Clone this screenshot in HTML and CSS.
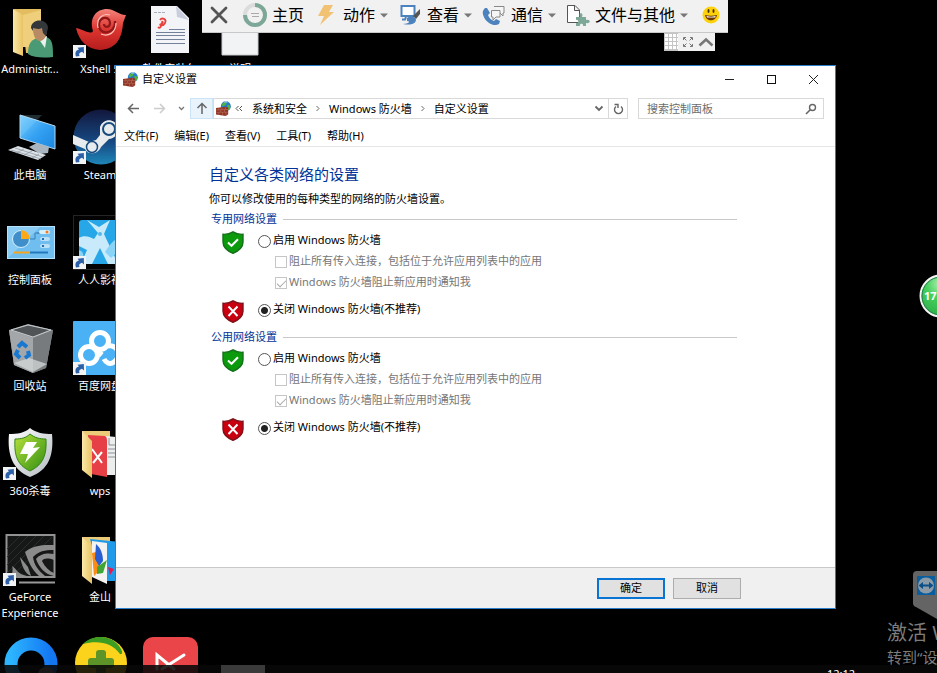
FILE: index.html
```html
<!DOCTYPE html>
<html lang="zh-CN">
<head>
<meta charset="utf-8">
<title>自定义设置</title>
<link rel="stylesheet" href="styles.css">
</head>
<body>
<svg class="defs" aria-hidden="true">
  <defs>
    <linearGradient id="fold" x1="0" x2="1"><stop offset="0" stop-color="#fbe9a8"/><stop offset="1" stop-color="#e9c365"/></linearGradient>
    <linearGradient id="screen" x1="0" y1="0" x2="1" y2="1"><stop offset="0" stop-color="#7fd0ff"/><stop offset=".5" stop-color="#35a2f2"/><stop offset="1" stop-color="#1a86e0"/></linearGradient>
    <linearGradient id="red" x1="0" y1="0" x2="0" y2="1"><stop offset="0" stop-color="#f4837a"/><stop offset=".5" stop-color="#dc342f"/><stop offset="1" stop-color="#b51d1d"/></linearGradient>
    <linearGradient id="steam" x1="0" y1="0" x2="0" y2="1"><stop offset="0" stop-color="#12173c"/><stop offset=".6" stop-color="#164a83"/><stop offset="1" stop-color="#1f86b8"/></linearGradient>
    <linearGradient id="ring" x1="0" x2="1"><stop offset="0" stop-color="#2cb4ff"/><stop offset="1" stop-color="#1377f2"/></linearGradient>
    <linearGradient id="lime" x1="0" y1="0" x2="1" y2="1"><stop offset="0" stop-color="#b9e23c"/><stop offset="1" stop-color="#2f8d12"/></linearGradient>
    <linearGradient id="silver" x1="0" y1="0" x2="1" y2="1"><stop offset="0" stop-color="#fff"/><stop offset="1" stop-color="#b4bcc2"/></linearGradient>
    <radialGradient id="ball" cx=".5" cy=".2" r=".8"><stop offset="0" stop-color="#b5f0b8"/><stop offset=".45" stop-color="#45cf5c"/><stop offset="1" stop-color="#2fb04a"/></radialGradient>
    <symbol id="link" viewBox="0 0 13 13"><rect width="13" height="13" fill="#f2f3f5"/><path d="M3 11.500C1.500 7.500 3.500 5 6 4.600L4.500 2.800 10.800 2 11 8.500 9 6.800C6.500 7.500 5.500 9 6.500 11Z" fill="#2b5fa8"/></symbol>
    <symbol id="firewall" viewBox="0 0 16 16">
      <circle cx="10.500" cy="5.500" r="5.300" fill="#2478d0"/><path d="M7 2.500c1.500-1.500 3-1.500 4-.5S9.500 4.500 8 5.500 6 4 7 2.500zM13 4c2 0 2.500 2 2 4s-2.500 2-2.500 0-1.500-3.500.5-4z" fill="#4fb53e"/><path d="M9 1.200q2-.8 3 .3" stroke="#c9edff" fill="none"/>
      <path d="M0 7.500 10 6l3 1V14l-2.500 2L0 14.500z" fill="#8e3526"/><path d="M0 9.500l13-.5M0 12h13M3 7.300v2M6.500 7v2.200M10 6.500V9M5 9.500v2.300M9 9.300v2.500M3 12v2.700M7 12v3.300M10.500 12v3.500" stroke="#c98270" stroke-width=".5"/>
    </symbol>
    <symbol id="ok" viewBox="0 0 22 23"><path d="M11 .8C14 2.800 17.500 3.500 21 3.300V11C21 16.500 16.500 20 11 22.300 5.500 20 1 16.500 1 11V3.300C4.500 3.500 8 2.800 11 .8Z" fill="#0b9a0b" stroke="#14701a" stroke-width="1.400"/><path d="M6 11.500 9.500 14.800 16 8.300" fill="none" stroke="#fff" stroke-width="2"/></symbol>
    <symbol id="bad" viewBox="0 0 22 23"><path d="M11 .8C14 2.800 17.500 3.500 21 3.300V11C21 16.500 16.500 20 11 22.300 5.500 20 1 16.500 1 11V3.300C4.500 3.500 8 2.800 11 .8Z" fill="#c80010" stroke="#7e1119" stroke-width="1.400"/><path d="M6.500 6.500 15.500 16M15.500 6.500 6.500 16" fill="none" stroke="#fff" stroke-width="2"/></symbol>
    <symbol id="caret" viewBox="0 0 8 5"><path d="M0 .5h8L4 4.500z" fill="#777"/></symbol>
  </defs>
</svg>

<main class="desktop">
  <div class="icons">
    <div class="item i11"><svg viewBox="0 0 56 56"><path d="M11 6H39V50H24L20 14Z" fill="#e3bd5f"/><path d="M11 6 21 12V53L11 49Z" fill="url(#fold)"/><path d="M21 12 39 7V44H21z" fill="#efcf7b"/><path d="M26 51C26 40 30 36 36 35L44 34C50 36 51 40 51 54 42 55 32 55 26 51Z" fill="#4b9a76"/><path d="M36 35 43 45 45 33z" fill="#e9f2ee"/><path d="M31 26C30 17 44 17 45 26 45 33 42 38 38 38S31 33 31 26Z" fill="#b98b64"/><path d="M29 25C29 15 46 15 46 25L44 33 41 30 40 25C36 27 33 25 31 25V28Z" fill="#33373a"/></svg><span>Administr...</span></div>
    <div class="item i12"><svg viewBox="0 0 56 56"><path d="M4 25C12 27 19 32 21 28 17 15 24 6 35 6 43 6 46 12 54 12L51 20C50 38 42 46 28 47 15 46 7 38 4 25Z" fill="url(#red)"/><path d="M43 18C44 32 26 33 27 21 28 13 38 13 38 20 38 25 32 25 32 21" fill="none" stroke="#8e1717" stroke-width="2.200"/><path d="M26 25C24 15 31 10 38 12M44 20C44 30 36 34 29 31" fill="none" stroke="#ffc4ba" stroke-width="1.200"/><use href="#link" x="1" y="42" width="13" height="13"/></svg><span>Xshell 5</span></div>
    <div class="item i13"><svg viewBox="0 0 56 56"><path d="M9 3H35L47 15V50H9Z" fill="#f3f4f8"/><path d="M34 3 47 17 35 14z" fill="#c9cede"/><path d="M18 17C20 14 25 16 23 20S16 22 19 21 20 17 20 20M20 20C19 24 18 26 16 24" fill="none" stroke="#e8413c" stroke-width="1.800"/><path d="M27 26.500H43M14 29.500H43M14 32.500H43M14 36.500H43M14 40.500H43" stroke="#73819a" stroke-width="1"/><path d="M12 9.500h11" stroke="#a7adbb" stroke-dasharray="3 1"/></svg><span>软件安装包</span></div>
    <div class="item i14"><svg viewBox="0 0 56 56"><path d="M10 2H46V52H10Z" fill="#f1f3f4" stroke="#c9cccf"/></svg><span>说明</span></div>

    <div class="item i21"><svg viewBox="0 0 56 56"><path d="M18 6 53 17V40L18 29Z" fill="url(#screen)" stroke="#b8d9ef"/><path d="M18 29 40 6 18 6z" fill="#9be0ff" opacity=".2"/><path d="M27 38 35 34 47 38 46 44 38 45Z" fill="#a9b6c0"/><path d="M6 41 16 37 44 46 36 51Z" fill="#dbe1e6"/><path d="M9 41 39 50M13 39 41 48M14 44 22 40M22 46 30 42M30 49 37 45" stroke="#86929b" stroke-width=".7"/></svg><span>此电脑</span></div>
    <div class="item i22"><svg viewBox="0 0 56 56"><circle cx="29" cy="28" r="27.500" fill="url(#steam)"/><path d="M1 26 17 33 24 31 28 26V18C31 9 43 9 46 18 47 25 42 30 37 30L29 38C26 46 15 46 13 40L1 35Z" fill="#e8ebee"/><circle cx="20" cy="38" r="5.500" fill="none" stroke="#174a7d" stroke-width="1.500"/><circle cx="37" cy="20" r="6" fill="none" stroke="#174a7d" stroke-width="2"/><use href="#link" x="1" y="42" width="13" height="13"/></svg><span>Steam</span></div>

    <div class="item i31"><svg viewBox="0 0 56 56"><rect x="5.500" y="12.500" width="47" height="32" fill="#70bdf0" stroke="#b6e3fb"/><path d="M6 44V13H38z" fill="#a6dbfa" opacity=".5"/><circle cx="19" cy="25" r="8.500" fill="#3f8ec9" stroke="#d1efff"/><path d="M19 25V16A9 9 0 0 1 28 25Z" fill="#fba919"/><path d="M28 25h5V19h5M35 19h5" stroke="#3681b4" fill="none"/><rect x="37" y="16" width="11" height="4" rx="2" fill="#d7eefb"/><rect x="38" y="23" width="10" height="4" rx="2" fill="#b9e0f7"/><rect x="38" y="30" width="10" height="4" rx="2" fill="#b9e0f7"/><circle cx="45" cy="18" r="1.500" fill="#f47a20"/><path d="M41 24v2M41 31v2" stroke="#246fa9" stroke-width="2"/><path d="M12 38.500H28" stroke="#f7a51d" stroke-width="2"/><path d="M28 38.500H46" stroke="#2378bb" stroke-width="2"/></svg><span>控制面板</span></div>
    <div class="item i32"><svg viewBox="0 0 56 56"><rect x="1.500" y="1.500" width="60" height="54" fill="#030303" stroke="#252525"/><rect x="7" y="6" width="47" height="44" rx="3" fill="#27a6e8"/><path d="M7 24C11 21 17 22 22 25L26 19 15 6 27 13 38 6 32 20 46 50H36L28 34 20 50H9L15 36 7 32Z" fill="#c9eafa"/><path d="M7 36C14 38 11 46 9 50H7ZM54 22C44 22 38 30 33 38L39 44 54 30Z" fill="#89d3f7"/><circle cx="28" cy="20" r="2" fill="#56b8e9"/><use href="#link" x="1" y="42" width="13" height="13"/></svg><span>人人影视</span></div>

    <div class="item i41"><svg viewBox="0 0 56 56"><path d="M7 10 26 4 51 10 44 48 31 53 12 45Z" fill="#909496"/><path d="M7 10 31 18 31 53 12 45Z" fill="#a4a7a9"/><path d="M31 18 51 10 44 48 31 53Z" fill="#777b7e"/><path d="M9 10 26 5 49 10 31 17Z" fill="#505457" stroke="#c9cccd"/><path d="M12 43 27 38 45 44 31 52Z" fill="#d5d8da" opacity=".75"/><g fill="none" stroke="#1878cf" stroke-width="4"><path d="M16 27 20 23 25 27M26 31 27 35 23 38M18 38 14 34 16 30"/></g></svg><span>回收站</span></div>
    <div class="item i42"><svg viewBox="0 0 56 56"><rect x="1" y="1" width="60" height="54" rx="1" fill="#4ab1f4"/><g fill="none" stroke="#fff" stroke-width="5"><circle cx="28" cy="21" r="8.500"/><circle cx="17" cy="35" r="8.500"/><path d="M22 28 30 35M35 26C46 24 50 36 42 42 38 45 34 43 32 39"/></g><use href="#link" x="1" y="42" width="13" height="13"/></svg><span>百度网盘</span></div>

    <div class="item i51"><svg viewBox="0 0 56 56"><path d="M28 3C34 8 42 9 50 9 52 30 47 45 28 52 11 45 5 30 7 9 15 9 23 8 28 3Z" fill="url(#silver)"/><path d="M28 9C33 13 38 14 44 14 45 30 41 40 28 46 15 40 12 30 13 14 19 14 24 13 28 9Z" fill="url(#lime)" stroke="#368417"/><path d="M24 17H35L31 23 38 22 23 38 26 29H18Z" fill="#fff"/><use href="#link" x="1" y="42" width="13" height="13"/></svg><span>360杀毒</span></div>
    <div class="item i52"><svg viewBox="0 0 56 56"><path d="M10 6H38V40H10Z" fill="#eccb78"/><path d="M34 11 44 12 56 18V50H34Z" fill="#eceded"/><path d="M37 13v7h7M36 24h14M36 28h14M36 32h14" stroke="#8c9094" fill="none"/><path d="M16 10 33 11Q35 12 35 15V52L19 49Z" fill="#e64046"/><path d="M20 24 30 38M30 27 21 38" stroke="#fff" stroke-width="2"/><path d="M10 6 20 16V53L10 45Z" fill="url(#fold)"/></svg><span>wps</span></div>

    <div class="item i61"><svg viewBox="0 0 56 56"><rect x="4.500" y="4" width="48" height="42" fill="#161817" stroke="#929292" stroke-width="2"/><path d="M5 18 18 5M5 26 26 5M5 34 34 5M5 42 42 5M13 42 50 6" stroke="#292c2b"/><path d="M23 21C31 14 41 14 52 14V19C42 19 37 20 31 26 32 34 36 39 43 45H37C29 38 26 29 23 21ZM34 28C39 22 46 22 52 23V29C46 27 42 27 40 30 43 36 47 40 52 42V45C42 43 37 36 34 28ZM10 35C15 38 15 43 25 45H13C8 42 12 39 10 35ZM18 26 26 36 29 45C22 42 20 34 18 26Z" fill="#8b8b8b"/><path d="M17 51.500H53" stroke="#999" stroke-width="2"/><use href="#link" x="1" y="42" width="13" height="13"/></svg><span>GeForce Experience</span></div>
    <div class="item i62"><svg viewBox="0 0 56 56"><path d="M10 6H38V40H10Z" fill="#eccb78"/><path d="M18 8 58 12V50H30Z" fill="#209bea"/><path d="M20 10 35 12V53L20 46Z" fill="#f4f3f1"/><path d="M20 22 28 20V39L22 45Z" fill="#fb8b12"/><path d="M24 13C29 17 31 24 31 30L27 35 23 28z" fill="#285ed2"/><path d="M25 36 35 29 31 42 25 43z" fill="#3fa536"/><path d="M36 36 42 38 38 44z" fill="#e8184d"/><path d="M10 6 20 16V53L10 45Z" fill="url(#fold)"/></svg><span>金山</span></div>

    <div class="item i71"><svg viewBox="0 3 56 56"><circle cx="29" cy="31" r="20" fill="none" stroke="url(#ring)" stroke-width="13"/><circle cx="44" cy="42" r="8" fill="#8a8a8a"/></svg></div>
    <div class="item i72"><svg viewBox="0 3 56 56"><circle cx="29" cy="30" r="26" fill="#fbd21c"/><path d="M11 11C20 2 38 1 47 13 51 18 51 22 48 21 40 9 25 7 11 11Z" fill="#3c9d22"/><rect x="24" y="17" width="10" height="27" rx="3" fill="#5d9428"/><rect x="16" y="25" width="26" height="10" rx="3" fill="#5d9428"/></svg></div>
    <div class="item i73"><svg viewBox="0 3 56 56"><rect x="1" y="4" width="55" height="54" rx="10" fill="#ea4549"/><path d="M15 36V22L32 36M20 36 42 22" fill="none" stroke="#fff" stroke-width="3" stroke-linecap="round"/></svg></div>
  </div>

  <nav class="remote">
    <div class="remote-bar">
      <button class="tool" aria-label="关闭"><svg width="20" height="22" viewBox="0 0 20 22"><path d="M3 4 17 18M17 4 3 18" stroke="#555" stroke-width="2.800" stroke-linecap="round"/></svg></button>
      <button class="tool"><svg width="24" height="24" viewBox="0 0 24 24"><circle cx="12" cy="12" r="10" fill="none" stroke="#dcdcdc" stroke-width="4"/><path d="M12 2A10 10 0 1 1 2 12" fill="none" stroke="#7da797" stroke-width="4"/><path d="M8 10.500h8M9 13.500h7" stroke="#aaa"/></svg>主页</button>
      <button class="tool"><svg width="24" height="24" viewBox="0 0 24 24"><path d="M10 2H19L15 9H20L6 22 10 13H4Z" fill="#f1c274"/></svg>动作<svg class="caret" width="8" height="5"><use href="#caret"/></svg></button>
      <button class="tool"><svg width="24" height="24" viewBox="0 0 24 24"><rect x="3.500" y="3" width="13" height="10" fill="#fff" stroke="#4c82bd" stroke-width="2"/><path d="M8 14 7 16.500H4" stroke="#4c82bd" stroke-width="2" fill="none"/><path d="M22 6V11L18 16 15 13Z" fill="#555"/><path d="M9 15C13 12 18 14 18 17 17 22 11 22 5 21 11 21 13 18 9 18Z" fill="#4c82bd"/></svg>查看<svg class="caret" width="8" height="5"><use href="#caret"/></svg></button>
      <button class="tool"><svg width="24" height="24" viewBox="0 0 24 24"><path d="M3 5 5 5 8 10 6 12C7 15 9 17 12 18L14 16 18 18 17 21C12 24 6 20 3 16 0 11 0 8 3 5Z" fill="#4c82bd"/><path d="M12 3.500H22V10H21V13L18 10" fill="#f5f5f5" stroke="#888"/><path d="M9.500 7.500H18V14H14L11 17V14H9.500Z" fill="#f5f5f5" stroke="#888"/></svg>通信<svg class="caret" width="8" height="5"><use href="#caret"/></svg></button>
      <button class="tool"><svg width="24" height="24" viewBox="0 0 24 24"><path d="M1.500 2.500H9L13.500 7V19.500H1.500ZM8.500 2.500V7.500H13" fill="#fff" stroke="#555"/><path d="M10 14H14C12 9 18 9 16 14H20V17C25 16 25 21 20 20V23H17C18 20 13 20 14 23H10V20C13 21 13 16 10 17Z" fill="#7da797"/></svg>文件与其他<svg class="caret" width="8" height="5"><use href="#caret"/></svg></button>
      <button class="tool smile" aria-label="反馈"><svg width="18" height="18" viewBox="0 0 18 18"><circle cx="9" cy="9" r="8.500" fill="#fdd20a"/><ellipse cx="6.500" cy="5" rx="1" ry="2" fill="#4a3000"/><ellipse cx="11.500" cy="5" rx="1" ry="2" fill="#4a3000"/><path d="M3 9C7 10 11 10 15 9 14 16 4 16 3 9Z" fill="#6b3805"/><path d="M4.500 10Q9 11.500 13.500 10V11.500H5Z" fill="#fff"/></svg></button>
    </div>
    <div class="remote-tab">
      <svg width="14" height="18" viewBox="0 0 14 18"><rect width="14" height="18" fill="#c4c4c4"/><path d="M1 2.500H14M1 6.500H14M1 10.500H14M1 14.500H14" stroke="#fff" stroke-width="3" stroke-dasharray="3 1"/></svg>
      <svg width="12" height="12" viewBox="0 0 12 12"><path d="M1.500 4V1.500H4M8 1.500H10.500V4M10.500 8V10.500H8M4 10.500H1.500V8M2 2 4.500 4.500M10 2 7.500 4.500M10 10 7.500 7.500M2 10 4.500 7.500" fill="none" stroke="#777"/></svg>
      <svg width="16" height="10" viewBox="0 0 16 10"><path d="M1.500 8.500 8 2.500 14.500 8.500" fill="none" stroke="#777" stroke-width="2.500"/></svg>
    </div>
  </nav>

  <section class="window">
    <header class="titlebar">
      <svg width="15" height="15"><use href="#firewall"/></svg>
      <h1>自定义设置</h1>
      <button aria-label="最小化"><svg width="11" height="11"><path d="M1 5.500H10" stroke="#222"/></svg></button>
      <button aria-label="最大化"><svg width="11" height="11"><rect x="1.500" y="1.500" width="8" height="8" fill="none" stroke="#111"/></svg></button>
      <button aria-label="关闭窗口"><svg width="11" height="11"><path d="M1 1 10 10M10 1 1 10" stroke="#222"/></svg></button>
    </header>
    <div class="address">
      <button class="nav" aria-label="后退"><svg width="13" height="11"><path d="M12 5.500H1.500M6 1 1.500 5.500 6 10" fill="none" stroke="#666" stroke-width="1.500"/></svg></button>
      <button class="nav" aria-label="前进"><svg width="13" height="11"><path d="M1 5.500H11.500M7 1 11.500 5.500 7 10" fill="none" stroke="#ccc" stroke-width="1.500"/></svg></button>
      <button class="recent" aria-label="最近位置"><svg width="7" height="5"><path d="M1 1 3.500 3.500 6 1" fill="none" stroke="#777" stroke-width="1.300"/></svg></button>
      <button class="up" aria-label="上移"><svg width="12" height="13"><path d="M6 12V1.500M1.500 6 6 1.500 10.500 6" fill="none" stroke="#666" stroke-width="1.500"/></svg></button>
      <div class="crumbs">
        <svg class="place" width="15" height="15"><use href="#firewall"/></svg>
        <svg width="8" height="7"><path d="M3.500 1 1 3.500 3.500 6M7 1 4.500 3.500 7 6" fill="none" stroke="#555"/></svg>
        <a href="#sys">系统和安全</a>
        <svg width="4" height="7"><path d="M.5 1 3 3.500.5 6" fill="none" stroke="#666"/></svg>
        <a href="#fw">Windows 防火墙</a>
        <svg width="4" height="7"><path d="M.5 1 3 3.500.5 6" fill="none" stroke="#666"/></svg>
        <a href="#custom">自定义设置</a>
        <button class="drop" aria-label="展开地址"><svg width="10" height="7"><path d="M1.500 1.500 5 5 8.500 1.500" fill="none" stroke="#666" stroke-width="1.800"/></svg></button>
        <button class="refresh" aria-label="刷新"><svg width="11" height="12" viewBox="0 0 11 12"><path d="M3 3.500A4 4 0 1 0 8 3.500M1.500 1.500H5V5" fill="none" stroke="#666" stroke-width="1.400"/></svg></button>
      </div>
      <label class="search"><input type="text" placeholder="搜索控制面板" aria-label="搜索控制面板"><svg width="12" height="12"><circle cx="7.500" cy="4.500" r="3" fill="none" stroke="#666" stroke-width="1.400"/><path d="M5.500 6.500 1 11" stroke="#666" stroke-width="1.600"/></svg></label>
    </div>
    <nav class="menu"><button>文件(F)</button><button>编辑(E)</button><button>查看(V)</button><button>工具(T)</button><button>帮助(H)</button></nav>

    <form class="page">
      <div class="content">
        <h2>自定义各类网络的设置</h2>
        <p>你可以修改使用的每种类型的网络的防火墙设置。</p>
        <fieldset>
          <legend>专用网络设置</legend>
          <div class="choice"><svg width="22" height="23"><use href="#ok"/></svg><div>
            <label><input type="radio" name="private">启用 Windows 防火墙</label>
            <label class="sub"><input type="checkbox" disabled>阻止所有传入连接，包括位于允许应用列表中的应用</label>
            <label class="sub"><input type="checkbox" checked disabled>Windows 防火墙阻止新应用时通知我</label>
          </div></div>
          <div class="choice"><svg width="22" height="23"><use href="#bad"/></svg><div>
            <label><input type="radio" name="private" checked>关闭 Windows 防火墙(不推荐)</label>
          </div></div>
        </fieldset>
        <fieldset>
          <legend>公用网络设置</legend>
          <div class="choice"><svg width="22" height="23"><use href="#ok"/></svg><div>
            <label><input type="radio" name="public">启用 Windows 防火墙</label>
            <label class="sub"><input type="checkbox" disabled>阻止所有传入连接，包括位于允许应用列表中的应用</label>
            <label class="sub"><input type="checkbox" checked disabled>Windows 防火墙阻止新应用时通知我</label>
          </div></div>
          <div class="choice"><svg width="22" height="23"><use href="#bad"/></svg><div>
            <label><input type="radio" name="public" checked>关闭 Windows 防火墙(不推荐)</label>
          </div></div>
        </fieldset>
      </div>
      <footer><button type="button" class="primary">确定</button><button type="button">取消</button></footer>
    </form>
  </section>

  <div class="ball"><svg width="44" height="44"><circle cx="22" cy="22" r="20.500" fill="url(#ball)" stroke="#f4f4f4" stroke-width="2"/><circle cx="22" cy="22" r="19" fill="none" stroke="#257c4b"/></svg><b>17</b></div>
  <div class="badge"><svg width="24" height="48" viewBox="0 0 24 48"><path d="M4 0H24V48L3 36Q0 35 0 32V4Q0 0 4 0Z" fill="#646464"/><rect x="4" y="5" width="18" height="19" fill="#0b5e9e"/><circle cx="13" cy="14.500" r="8" fill="#8d9ba6"/><path d="M5.500 14.500 10 11V13.500H16V11L20.500 14.500 16 18V15.500H10V18Z" fill="#0b4f88"/></svg></div>
  <div class="activate"><strong>激活 W</strong><span>转到“设</span></div>
  <div class="taskbar"><i class="running"></i><time>12:12</time></div>
</main>
</body>
</html>
```
FILE: styles.css
```css
* { box-sizing: border-box; }
html, body { height: 100%; }
body {
  margin: 0;
  overflow: hidden;
  background: #000;
  color: #000;
  font: 11px/16px "Noto Sans", "Noto Sans CJK SC", sans-serif;
}
button, input { font: inherit; color: inherit; }
button { padding: 0; border: 0; background: none; }
svg { display: block; flex: none; }
h1, h2, p { margin: 0; font-weight: 400; }
.defs { position: absolute; width: 0; height: 0; }

.desktop { position: relative; height: 100vh; overflow: hidden; }

/* desktop icons */
.icons {
  display: grid;
  grid-template-columns: repeat(4, 70px);
  grid-template-rows: repeat(3, 106px 105px) 105px;
  margin-left: -5px;
}
.item {
  display: flex;
  flex-direction: column;
  align-items: center;
  gap: 2px;
  padding-top: 3px;
  color: #fff;
  text-align: center;
}
.item svg { width: 56px; height: 56px; }
.item span { width: 64px; }
.i11, .i21, .i31, .i41, .i51, .i61, .i71 { grid-column: 1; }
.i12, .i22, .i32, .i42, .i52, .i62, .i72 { grid-column: 2; }
.i73 { grid-column: 3; }

/* remote control bar */
.remote {
  position: absolute;
  top: 0;
  left: 202px;
  display: flex;
  flex-direction: column;
  align-items: flex-end;
}
.remote-bar {
  display: flex;
  align-items: center;
  gap: 10px;
  height: 33px;
  padding: 0 8px 2px 7px;
  background: #f1f1f1;
  border-bottom: 1px solid #c8c8c8;
}
.tool {
  display: flex;
  align-items: center;
  gap: 5px;
  height: 30px;
  font-size: 16px;
}
.tool:first-child { margin-right: 4px; }
.tool.smile { margin-left: 4px; }
.remote-tab {
  display: flex;
  align-items: center;
  gap: 4px;
  height: 18px;
  margin-right: 13px;
  padding-right: 1px;
  background: #f1f1f1;
}

/* settings window */
.window {
  position: absolute;
  inset: 65px 101px 64px 115px;
  display: flex;
  flex-direction: column;
  border: 1px solid #2b7fc8;
  background: #fff;
}
.titlebar { display: flex; align-items: center; height: 26px; padding: 0 16px 0 7px; }
.titlebar h1 { flex: 1; margin-left: 4px; font-size: 11px; }
.titlebar button { margin-left: 31px; }
.address { display: flex; align-items: center; height: 33px; padding: 0 11px 0 10px; }
.nav { width: 26px; padding-left: 1px; }
.recent { width: 12px; }
.up {
  display: grid;
  place-items: center;
  width: 23px;
  height: 21px;
  border: 1px solid #cce4f7;
  background: #e8f3fc;
}
.crumbs {
  display: flex;
  flex: 1;
  align-items: center;
  gap: 9px;
  height: 21px;
  padding-left: 2px;
  border: 1px solid #d9d9d9;
}
.crumbs a { color: inherit; text-decoration: none; white-space: nowrap; }
.crumbs .place { margin-right: -5px; }
.crumbs .drop { margin-left: auto; margin-right: -5px; }
.refresh {
  display: grid;
  place-items: center;
  width: 19px;
  height: 19px;
  border-left: 1px solid #d9d9d9;
}
.search {
  display: flex;
  align-items: center;
  width: 186px;
  height: 21px;
  margin-left: 10px;
  padding: 0 6px 0 8px;
  border: 1px solid #d9d9d9;
}
.search input { flex: 1; min-width: 0; padding: 0; border: 0; outline: 0; background: none; }
.search input::placeholder { color: #6d6d6d; opacity: 1; }
.menu {
  display: flex;
  gap: 16px;
  height: 22px;
  padding-left: 8px;
  border-bottom: 1px solid #e6e6e6;
}

.page { display: flex; flex: 1; flex-direction: column; min-height: 0; }
.content { flex: 1; padding: 16px 98px 0 93px; }
h2 { font-size: 15px; line-height: 22px; color: #003399; }
p { margin-top: 3px; line-height: 21px; }
fieldset { min-width: 0; margin: 0 0 4px; padding: 0; border: 0; }
legend {
  display: flex;
  align-items: center;
  gap: 6px;
  width: 100%;
  height: 20px;
  padding: 0 0 0 2px;
  color: #003399;
}
legend::after { content: ""; flex: 1; height: 1px; background: #c8c8c8; }
.choice { display: flex; gap: 14px; padding-left: 13px; }
.choice > svg { margin-top: 2px; }
.choice + .choice { margin-top: 6px; }
label { display: flex; align-items: center; }
.choice label { gap: 2px; height: 21px; }
.choice .sub { margin-left: 17px; color: #767676; }
.choice input {
  appearance: none;
  flex: none;
  width: 13px;
  height: 13px;
  margin: 3px 0 0;
  border: 1px solid #555;
  background: #fff;
}
.choice input[type="radio"] { border-radius: 50%; }
.choice input[type="radio"]:checked { background: radial-gradient(circle, #222 3px, #fff 4px); }
.choice input[type="checkbox"] { width: 12px; height: 12px; border-color: #c6c6c6; }
.choice input[type="checkbox"]:checked::before {
  content: "";
  display: block;
  width: 8px;
  height: 4px;
  margin: 2px 1px;
  border: solid #aaa;
  border-width: 0 0 1px 1px;
  transform: rotate(-45deg);
}
footer {
  display: flex;
  align-items: center;
  justify-content: flex-end;
  gap: 8px;
  height: 41px;
  padding-right: 94px;
  border-top: 1px solid #c9c9c9;
  background: #f0f0f0;
}
footer button { width: 68px; height: 21px; border: 1px solid #adadad; background: #e1e1e1; }
footer .primary { border: 2px solid #0a74d4; }

/* desktop overlays */
.ball { position: absolute; top: 274px; right: -26px; }
.ball b {
  position: absolute;
  top: 14px;
  left: 5px;
  color: #fff;
  font: 700 11px/16px "Noto Sans", sans-serif;
}
.badge { position: absolute; top: 571px; right: 0; }
.activate {
  position: absolute;
  top: 620px;
  left: calc(100% - 50px);
  color: #7d7d7d;
  white-space: nowrap;
}
.activate strong { display: block; font-size: 20px; line-height: 26px; font-weight: 400; }
.activate span { font-size: 15px; line-height: 22px; }
.taskbar {
  position: absolute;
  right: 0;
  bottom: 0;
  left: 0;
  display: flex;
  justify-content: space-between;
  height: 8px;
  padding: 0 82px 0 221px;
  overflow: hidden;
  background: rgba(8, 8, 8, 0.88);
  color: #fff;
}
.running { width: 44px; background: #3a3a3a; }
.taskbar time { line-height: 18px; }
```
